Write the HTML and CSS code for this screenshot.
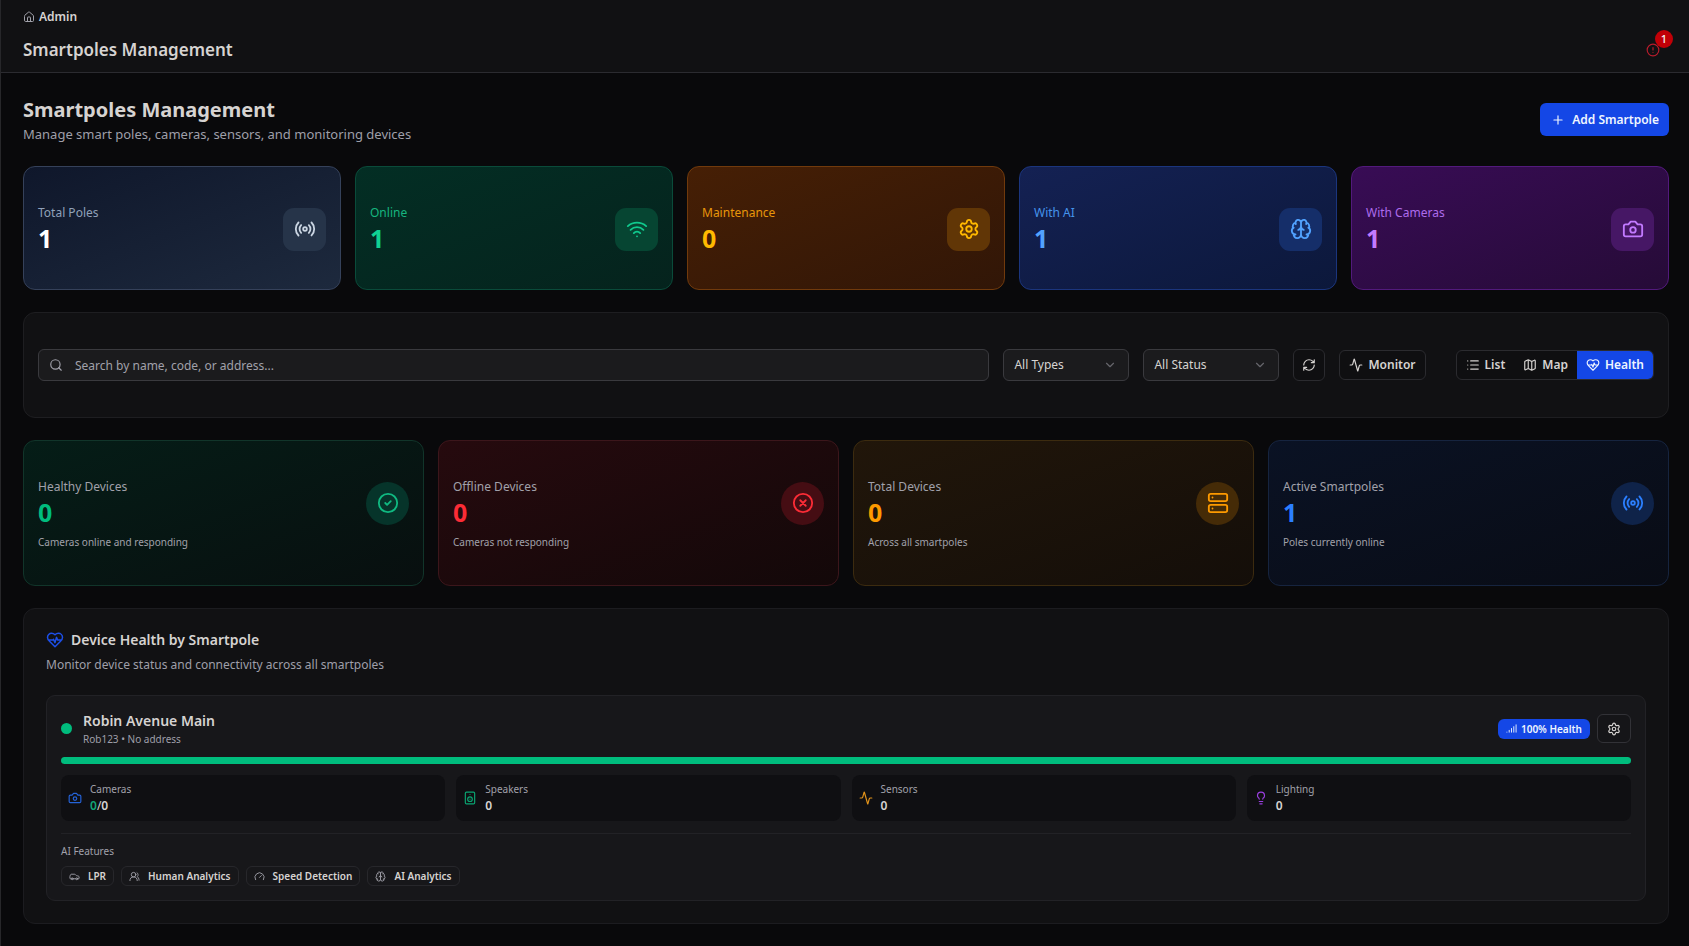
FILE: index.html
```html
<!DOCTYPE html>
<html lang="en">
<head>
<meta charset="utf-8">
<meta name="viewport" content="width=device-width, initial-scale=1">
<title>Smartpoles Management</title>
<link rel="stylesheet" href="styles.css">
</head>
<body>
<svg class="sprite" aria-hidden="true">
  <symbol id="i-house" viewBox="0 0 24 24"><path d="M15 21v-8a1 1 0 0 0-1-1h-4a1 1 0 0 0-1 1v8"/><path d="M3 10a2 2 0 0 1 .709-1.528l7-5.999a2 2 0 0 1 2.582 0l7 5.999A2 2 0 0 1 21 10v9a2 2 0 0 1-2 2H5a2 2 0 0 1-2-2z"/></symbol>
  <symbol id="i-alert" viewBox="0 0 24 24"><circle cx="12" cy="12" r="10"/><path d="M12 8v4M12 16h.01"/></symbol>
  <symbol id="i-plus" viewBox="0 0 24 24"><path d="M5 12h14M12 5v14"/></symbol>
  <symbol id="i-radio" viewBox="0 0 24 24"><path d="M4.9 19.1C1 15.2 1 8.8 4.9 4.9M7.8 16.2c-2.3-2.3-2.3-6.1 0-8.5M16.2 7.8c2.3 2.3 2.3 6.1 0 8.5M19.1 4.9C23 8.8 23 15.1 19.1 19"/><circle cx="12" cy="12" r="2"/></symbol>
  <symbol id="i-wifi" viewBox="0 0 24 24"><path d="M12 20h.01M2 8.82a15 15 0 0 1 20 0M5 12.859a10 10 0 0 1 14 0M8.5 16.429a5 5 0 0 1 7 0"/></symbol>
  <symbol id="i-settings" viewBox="0 0 24 24"><path d="M9.671 4.136a2.34 2.34 0 0 1 4.659 0 2.34 2.34 0 0 0 3.319 1.915 2.34 2.34 0 0 1 2.33 4.033 2.34 2.34 0 0 0 0 3.831 2.34 2.34 0 0 1-2.33 4.033 2.34 2.34 0 0 0-3.319 1.915 2.34 2.34 0 0 1-4.659 0 2.34 2.34 0 0 0-3.32-1.915 2.34 2.34 0 0 1-2.33-4.033 2.34 2.34 0 0 0 0-3.831A2.34 2.34 0 0 1 6.35 6.051a2.34 2.34 0 0 0 3.319-1.915"/><circle cx="12" cy="12" r="3"/></symbol>
  <symbol id="i-brain" viewBox="0 0 24 24"><path d="M12 18V5M15 13a4.17 4.17 0 0 1-3-4 4.17 4.17 0 0 1-3 4M17.598 6.5A3 3 0 1 0 12 5a3 3 0 1 0-5.598 1.5M17.997 5.125a4 4 0 0 1 2.526 5.77M18 18a4 4 0 0 0 2-7.464M19.967 17.483A4 4 0 1 1 12 18a4 4 0 1 1-7.967-.517M6 18a4 4 0 0 1-2-7.464M6.003 5.125a4 4 0 0 0-2.526 5.77"/></symbol>
  <symbol id="i-camera" viewBox="0 0 24 24"><path d="M14.5 4h-5L7 7H4a2 2 0 0 0-2 2v9a2 2 0 0 0 2 2h16a2 2 0 0 0 2-2V9a2 2 0 0 0-2-2h-3z"/><circle cx="12" cy="13" r="3"/></symbol>
  <symbol id="i-search" viewBox="0 0 24 24"><circle cx="11" cy="11" r="8"/><path d="m21 21-4.3-4.3"/></symbol>
  <symbol id="i-chevron" viewBox="0 0 24 24"><path d="m6 9 6 6 6-6"/></symbol>
  <symbol id="i-refresh" viewBox="0 0 24 24"><path d="M3 12a9 9 0 0 1 9-9 9.75 9.75 0 0 1 6.74 2.74L21 8M21 3v5h-5M21 12a9 9 0 0 1-9 9 9.75 9.75 0 0 1-6.74-2.74L3 16M8 16H3v5"/></symbol>
  <symbol id="i-activity" viewBox="0 0 24 24"><path d="M22 12h-2.48a2 2 0 0 0-1.93 1.46l-2.35 8.36a.25.25 0 0 1-.48 0L9.24 2.18a.25.25 0 0 0-.48 0l-2.35 8.36A2 2 0 0 1 4.49 12H2"/></symbol>
  <symbol id="i-list" viewBox="0 0 24 24"><path d="M3 5h.01M3 12h.01M3 19h.01M8 5h13M8 12h13M8 19h13"/></symbol>
  <symbol id="i-map" viewBox="0 0 24 24"><path d="M14.106 5.553a2 2 0 0 0 1.788 0l3.659-1.83A1 1 0 0 1 21 4.619v12.764a1 1 0 0 1-.553.894l-4.553 2.277a2 2 0 0 1-1.788 0l-4.212-2.106a2 2 0 0 0-1.788 0l-3.659 1.83A1 1 0 0 1 3 19.381V6.618a1 1 0 0 1 .553-.894l4.553-2.277a2 2 0 0 1 1.788 0zM15 5.764v15M9 3.236v15"/></symbol>
  <symbol id="i-heart" viewBox="0 0 24 24"><path d="M19 14c1.49-1.46 3-3.21 3-5.5A5.5 5.5 0 0 0 16.5 3c-1.76 0-3 .5-4.5 2-1.5-1.5-2.74-2-4.5-2A5.5 5.5 0 0 0 2 8.5c0 2.3 1.5 4.05 3 5.5l7 7ZM3.22 12H9.5l.5-1 2 4.5 2-7 1.5 3.5h5.27"/></symbol>
  <symbol id="i-check" viewBox="0 0 24 24"><circle cx="12" cy="12" r="10"/><path d="m9 12 2 2 4-4"/></symbol>
  <symbol id="i-x" viewBox="0 0 24 24"><circle cx="12" cy="12" r="10"/><path d="m15 9-6 6M9 9l6 6"/></symbol>
  <symbol id="i-server" viewBox="0 0 24 24"><rect x="2" y="2" width="20" height="8" rx="2"/><rect x="2" y="14" width="20" height="8" rx="2"/><path d="M6 6h.01M6 18h.01"/></symbol>
  <symbol id="i-signal" viewBox="0 0 24 24"><path d="M2 20h.01M7 20v-4M12 20v-8M17 20V8M22 4v16"/></symbol>
  <symbol id="i-speaker" viewBox="0 0 24 24"><rect x="4" y="2" width="16" height="20" rx="2"/><path d="M12 6h.01M12 14h.01"/><circle cx="12" cy="14" r="4"/></symbol>
  <symbol id="i-bulb" viewBox="0 0 24 24"><path d="M15 14c.2-1 .7-1.7 1.5-2.5 1-.9 1.5-2.2 1.5-3.5A6 6 0 0 0 6 8c0 1 .2 2.2 1.5 3.5.7.7 1.3 1.5 1.5 2.5M9 18h6M10 22h4"/></symbol>
  <symbol id="i-car" viewBox="0 0 24 24"><path d="M19 17h2c.6 0 1-.4 1-1v-3c0-.9-.7-1.7-1.5-1.9C18.7 10.6 16 10 16 10s-1.3-1.4-2.2-2.3c-.5-.4-1.1-.7-1.8-.7H5c-.6 0-1.1.4-1.4.9l-1.4 2.9A3.7 3.7 0 0 0 2 12v4c0 .6.4 1 1 1h2M9 17h6"/><circle cx="7" cy="17" r="2"/><circle cx="17" cy="17" r="2"/></symbol>
  <symbol id="i-users" viewBox="0 0 24 24"><path d="M18 21a8 8 0 0 0-16 0"/><circle cx="10" cy="8" r="5"/><path d="M22 20c0-3.370-2-6.500-4-8a5 5 0 0 0-.45-8.300"/></symbol>
  <symbol id="i-gauge" viewBox="0 0 24 24"><path d="m12 14 4-4M3.340 19a10 10 0 1 1 17.320 0"/></symbol>
</svg>

<div class="app">
  <header class="topbar">
    <nav class="crumbs" aria-label="Breadcrumb">
      <svg class="icon icon-12"><use href="#i-house"/></svg>
      <a class="crumb" href="#">Admin</a>
    </nav>
    <div class="topbar-row">
      <p class="topbar-title">Smartpoles Management</p>
      <button class="alerts" type="button" aria-label="Alerts">
        <svg class="icon icon-14"><use href="#i-alert"/></svg>
        <span class="alerts-count">1</span>
      </button>
    </div>
  </header>

  <main class="content">
    <div class="page-head">
      <div>
        <h1 class="page-title">Smartpoles Management</h1>
        <p class="page-sub">Manage smart poles, cameras, sensors, and monitoring devices</p>
      </div>
      <button class="btn-primary" type="button"><svg class="icon icon-14"><use href="#i-plus"/></svg>Add Smartpole</button>
    </div>

    <section class="stats" aria-label="Pole totals">
      <article class="stat stat-slate"><div><p class="label">Total Poles</p><p class="value">1</p></div><span class="tile"><svg class="icon icon-22"><use href="#i-radio"/></svg></span></article>
      <article class="stat stat-green"><div><p class="label">Online</p><p class="value">1</p></div><span class="tile"><svg class="icon icon-22"><use href="#i-wifi"/></svg></span></article>
      <article class="stat stat-amber"><div><p class="label">Maintenance</p><p class="value">0</p></div><span class="tile"><svg class="icon icon-22"><use href="#i-settings"/></svg></span></article>
      <article class="stat stat-blue"><div><p class="label">With AI</p><p class="value">1</p></div><span class="tile"><svg class="icon icon-22"><use href="#i-brain"/></svg></span></article>
      <article class="stat stat-purple"><div><p class="label">With Cameras</p><p class="value">1</p></div><span class="tile"><svg class="icon icon-22"><use href="#i-camera"/></svg></span></article>
    </section>

    <section class="filters" aria-label="Filters">
      <label class="search">
        <svg class="icon icon-14"><use href="#i-search"/></svg>
        <input class="search-input" type="text" aria-label="Search smartpoles" placeholder="Search by name, code, or address...">
      </label>
      <div class="select select-type">
        <select class="select-input" aria-label="Type"><option>All Types</option></select>
        <svg class="icon icon-14"><use href="#i-chevron"/></svg>
      </div>
      <div class="select select-status">
        <select class="select-input" aria-label="Status"><option>All Status</option></select>
        <svg class="icon icon-14"><use href="#i-chevron"/></svg>
      </div>
      <button class="btn-outline btn-square" type="button" aria-label="Refresh"><svg class="icon icon-14"><use href="#i-refresh"/></svg></button>
      <button class="btn-outline" type="button"><svg class="icon icon-14"><use href="#i-activity"/></svg>Monitor</button>
      <div class="views" role="group" aria-label="View">
        <button class="view" type="button"><svg class="icon icon-14"><use href="#i-list"/></svg>List</button>
        <button class="view" type="button"><svg class="icon icon-14"><use href="#i-map"/></svg>Map</button>
        <button class="view view-on" type="button" aria-pressed="true"><svg class="icon icon-14"><use href="#i-heart"/></svg>Health</button>
      </div>
    </section>

    <section class="health" aria-label="Device totals">
      <article class="metric metric-green"><div class="metric-row"><div><p class="label">Healthy Devices</p><p class="value">0</p></div><span class="disc"><svg class="icon icon-22"><use href="#i-check"/></svg></span></div><p class="note">Cameras online and responding</p></article>
      <article class="metric metric-red"><div class="metric-row"><div><p class="label">Offline Devices</p><p class="value">0</p></div><span class="disc"><svg class="icon icon-22"><use href="#i-x"/></svg></span></div><p class="note">Cameras not responding</p></article>
      <article class="metric metric-amber"><div class="metric-row"><div><p class="label">Total Devices</p><p class="value">0</p></div><span class="disc"><svg class="icon icon-22"><use href="#i-server"/></svg></span></div><p class="note">Across all smartpoles</p></article>
      <article class="metric metric-blue"><div class="metric-row"><div><p class="label">Active Smartpoles</p><p class="value">1</p></div><span class="disc"><svg class="icon icon-22"><use href="#i-radio"/></svg></span></div><p class="note">Poles currently online</p></article>
    </section>

    <section class="panel">
      <h2 class="panel-title"><svg class="icon icon-18"><use href="#i-heart"/></svg>Device Health by Smartpole</h2>
      <p class="panel-sub">Monitor device status and connectivity across all smartpoles</p>

      <article class="pole">
        <div class="pole-head">
          <span class="dot"></span>
          <div class="pole-id">
            <h3 class="pole-name">Robin Avenue Main</h3>
            <p class="pole-meta">Rob123 • No address</p>
          </div>
          <span class="badge"><svg class="icon icon-11"><use href="#i-signal"/></svg>100% Health</span>
          <button class="btn-gear" type="button" aria-label="Pole settings"><svg class="icon icon-14"><use href="#i-settings"/></svg></button>
        </div>
        <div class="bar" role="progressbar" aria-label="Health" aria-valuenow="100" aria-valuemin="0" aria-valuemax="100"><div class="bar-fill" style="width:100%"></div></div>
        <div class="devices">
          <div class="device"><svg class="icon icon-14 c-blue"><use href="#i-camera"/></svg><div><p class="device-label">Cameras</p><p class="device-value"><span class="ok">0</span><span class="slash">/</span>0</p></div></div>
          <div class="device"><svg class="icon icon-14 c-green"><use href="#i-speaker"/></svg><div><p class="device-label">Speakers</p><p class="device-value">0</p></div></div>
          <div class="device"><svg class="icon icon-14 c-amber"><use href="#i-activity"/></svg><div><p class="device-label">Sensors</p><p class="device-value">0</p></div></div>
          <div class="device"><svg class="icon icon-14 c-purple"><use href="#i-bulb"/></svg><div><p class="device-label">Lighting</p><p class="device-value">0</p></div></div>
        </div>
        <div class="features">
          <p class="features-label">AI Features</p>
          <ul class="chips">
            <li class="chip"><svg class="icon icon-11"><use href="#i-car"/></svg>LPR</li>
            <li class="chip"><svg class="icon icon-11"><use href="#i-users"/></svg>Human Analytics</li>
            <li class="chip"><svg class="icon icon-11"><use href="#i-gauge"/></svg>Speed Detection</li>
            <li class="chip"><svg class="icon icon-11"><use href="#i-brain"/></svg>AI Analytics</li>
          </ul>
        </div>
      </article>
    </section>
  </main>
</div>
</body>
</html>
```
FILE: styles.css
```css
*, *::before, *::after { box-sizing: border-box; }
body, h1, h2, h3, p, ul { margin: 0; padding: 0; }
body {
  background: #09090b;
  color: #d6d3d1;
  font-family: "Noto Sans", "Open Sans", sans-serif;
  font-size: 12px;
  line-height: 18px;
}
button, input, select { font: inherit; color: inherit; }
button { cursor: pointer; }
a { color: inherit; text-decoration: none; }
.sprite { display: none; }
.icon {
  flex: none;
  fill: none;
  stroke: currentColor;
  stroke-width: 2;
  stroke-linecap: round;
  stroke-linejoin: round;
}
.icon-11 { width: 11px; height: 11px; }
.icon-12 { width: 12px; height: 12px; }
.icon-14 { width: 14px; height: 14px; }
.icon-18 { width: 18px; height: 18px; }
.icon-22 { width: 22px; height: 22px; }

.app { min-height: 100vh; border-left: 1px solid #27272a; }

/* Top bar */
.topbar {
  display: flex;
  flex-direction: column;
  gap: 10px;
  padding: 8px 22px;
  background: #111113;
  border-bottom: 1px solid #2b2b30;
}
.crumbs { display: flex; align-items: center; gap: 4px; color: #a1a1aa; }
.crumb { color: #d6d3d1; font-weight: 600; }
.topbar-row { display: flex; align-items: center; justify-content: space-between; }
.topbar-title { font-size: 17px; line-height: 28px; font-weight: 600; }
.alerts {
  position: relative;
  display: flex;
  align-items: center;
  justify-content: center;
  width: 28px;
  height: 28px;
  padding: 0;
  border: 0;
  background: none;
  color: #b91c2c;
}
.alerts-count {
  position: absolute;
  top: -6px;
  right: -6px;
  width: 18px;
  height: 18px;
  border-radius: 9px;
  background: #c10007;
  color: #f4f4f5;
  font-size: 11px;
  font-weight: 500;
  line-height: 18px;
}

/* Page */
.content {
  display: flex;
  flex-direction: column;
  gap: 22px;
  padding: 22px 20px 22px 22px;
}
.page-head { display: flex; align-items: center; justify-content: space-between; }
.page-title { font-size: 20px; line-height: 29px; font-weight: 700; }
.page-sub { font-size: 13px; line-height: 20px; color: #9f9fa9; }
.btn-primary {
  display: flex;
  align-items: center;
  gap: 7px;
  height: 33px;
  padding: 0 10px 0 11px;
  border: 0;
  border-radius: 6px;
  background: #1447e6;
  color: #eff6ff;
  font-weight: 600;
}

.label { line-height: 18px; }
.value { font-size: 25px; line-height: 32px; font-weight: 700; }
.note { margin-top: 7px; font-size: 10px; line-height: 15px; color: #a1a1aa; }

.stats { display: grid; grid-template-columns: repeat(5, 1fr); gap: 14px; }
.stat {
  display: flex;
  align-items: center;
  justify-content: space-between;
  padding: 37px 14px 35px;
  border: 1px solid;
  border-radius: 12px;
}
.tile, .disc { display: grid; place-items: center; width: 43px; height: 43px; }
.tile { border-radius: 11px; }
.disc { border-radius: 50%; }

.stat-slate { background: linear-gradient(to bottom right, #0f172b, #1d293d); border-color: #35415a; color: #90a1b9; }
.stat-slate .value { color: #ffffff; }
.stat-slate .tile { background: #263449; color: #cad5e2; }
.stat-green { background: linear-gradient(to bottom right, #032e24, #05231d); border-color: #0a4b3a; color: #16b57f; }
.stat-green .value { color: #10d293; }
.stat-green .tile { background: #064532; color: #10c98d; }
.stat-amber { background: linear-gradient(to bottom right, #461f05, #311607); border-color: #713a0c; color: #e8960a; }
.stat-amber .value { color: #ffb900; }
.stat-amber .tile { background: #613606; color: #ffb900; }
.stat-blue { background: linear-gradient(to bottom right, #142153, #0c183b); border-color: #1b357d; color: #4594ec; }
.stat-blue .value { color: #51a2ff; }
.stat-blue .tile { background: #152e69; color: #51a2ff; }
.stat-purple { background: linear-gradient(to bottom right, #380c55, #260b37); border-color: #521a7c; color: #ad6bec; }
.stat-purple .value { color: #c27aff; }
.stat-purple .tile { background: #461765; color: #c27aff; }

/* Filters */
.filters {
  display: flex;
  align-items: center;
  gap: 14px;
  padding: 36px 14px;
  border: 1px solid #1e1e21;
  border-radius: 12px;
  background: #111113;
}
.search, .select { position: relative; display: flex; align-items: center; }
.search { flex: 1; }
.search .icon { position: absolute; left: 11px; color: #a1a1aa; }
.search-input, .select-input {
  width: 100%;
  height: 32px;
  border: 1px solid #3a3a3e;
  border-radius: 6px;
  background: #1b1b1d;
  outline: 0;
}
.search-input { padding: 0 12px 0 36px; }
.search-input::placeholder { color: #a1a1aa; opacity: 1; }
.select-input { appearance: none; padding: 0 32px 0 10px; }
.select .icon { position: absolute; right: 12px; color: #66666c; pointer-events: none; }
.select-type { width: 126px; }
.select-status { width: 136px; }
.btn-outline {
  display: flex;
  align-items: center;
  justify-content: center;
  gap: 5px;
  height: 30px;
  padding: 0 9px;
  border: 1px solid #2b2b2f;
  border-radius: 6px;
  background: #0f0f11;
  font-weight: 600;
}
.btn-square { width: 32px; height: 32px; padding: 0; }
.views {
  display: flex;
  height: 30px;
  margin-left: 16px;
  overflow: hidden;
  border: 1px solid #2b2b2f;
  border-radius: 6px;
  background: #0f0f11;
}
.view {
  display: flex;
  align-items: center;
  gap: 5px;
  padding: 0 9px;
  border: 0;
  background: none;
  font-weight: 600;
}
.view-on { background: #1447e6; color: #eff6ff; }

/* Health metrics */
.health { display: grid; grid-template-columns: repeat(4, 1fr); gap: 14px; }
.metric { padding: 37px 14px 35px; border: 1px solid; border-radius: 12px; color: #a1a1aa; }
.metric-row { display: flex; align-items: center; justify-content: space-between; }
.metric-green { background: linear-gradient(to bottom right, #051d17, #080f0f); border-color: #11352a; }
.metric-green .value { color: #00bc7d; }
.metric-green .disc { background: #06342a; color: #10b981; }
.metric-red { background: linear-gradient(to bottom right, #260a0e, #130809); border-color: #3c161b; }
.metric-red .value { color: #fb2c36; }
.metric-red .disc { background: #450d13; color: #fb2c36; }
.metric-amber { background: linear-gradient(to bottom right, #21160a, #140e09); border-color: #3c2b0f; }
.metric-amber .value { color: #fe9a00; }
.metric-amber .disc { background: #452b07; color: #fe9a00; }
.metric-blue { background: linear-gradient(to bottom right, #0a1224, #090c15); border-color: #16243f; }
.metric-blue .value { color: #2b7fff; }
.metric-blue .disc { background: #0f2349; color: #2b7fff; }

/* Device health panel */
.panel { padding: 22px; border: 1px solid #1c1c20; border-radius: 12px; background: #111113; }
.panel-title { display: flex; align-items: center; gap: 7px; font-size: 14px; line-height: 18px; font-weight: 600; }
.panel-title .icon { color: #1d4fe8; }
.panel-sub { margin-top: 7px; color: #9f9fa9; }
.pole { margin-top: 21px; padding: 14px; border: 1px solid #222226; border-radius: 9px; background: #17171a; }
.pole-head { display: flex; align-items: center; }
.dot { width: 11px; height: 11px; border-radius: 50%; background: #00bc7d; }
.pole-id { flex: 1; margin-left: 11px; }
.pole-name { font-size: 14px; line-height: 21px; font-weight: 600; }
.pole-meta { font-size: 10px; line-height: 16px; color: #9f9fa9; }
.badge {
  display: flex;
  align-items: center;
  gap: 4px;
  height: 20px;
  padding: 0 8px;
  border-radius: 6px;
  background: #1447e6;
  color: #eff6ff;
  font-size: 10px;
  font-weight: 600;
}
.btn-gear {
  display: grid;
  place-items: center;
  width: 34px;
  height: 29px;
  margin-left: 7px;
  padding: 0;
  border: 1px solid #323237;
  border-radius: 6px;
  background: #151518;
}
.bar { height: 7px; margin-top: 10px; overflow: hidden; border-radius: 4px; background: #27272a; }
.bar-fill { height: 100%; background: #00bc7d; }
.devices { display: grid; grid-template-columns: repeat(4, 1fr); gap: 11px; margin-top: 11px; }
.device { display: flex; align-items: center; gap: 8px; padding: 7px; border-radius: 8px; background: #0f0f12; }
.device-label { font-size: 10px; line-height: 15px; color: #a1a1aa; }
.device-value { font-size: 12px; line-height: 17px; font-weight: 600; }
.ok { color: #12a676; }
.slash { font-weight: 400; }
.c-blue { color: #2563d8; }
.c-green { color: #0aa572; }
.c-amber { color: #e0921a; }
.c-purple { color: #9a3fe0; }
.features { margin-top: 12px; padding-top: 10px; border-top: 1px solid #222226; }
.features-label { font-size: 10px; line-height: 15px; color: #a1a1aa; }
.chips { display: flex; flex-wrap: wrap; gap: 7px; margin-top: 7px; list-style: none; }
.chip {
  display: flex;
  align-items: center;
  gap: 8px;
  height: 20px;
  padding: 0 7px;
  border: 1px solid #27272b;
  border-radius: 6px;
  font-size: 10px;
  font-weight: 600;
}
.chip .icon { color: #a1a1aa; }
```
